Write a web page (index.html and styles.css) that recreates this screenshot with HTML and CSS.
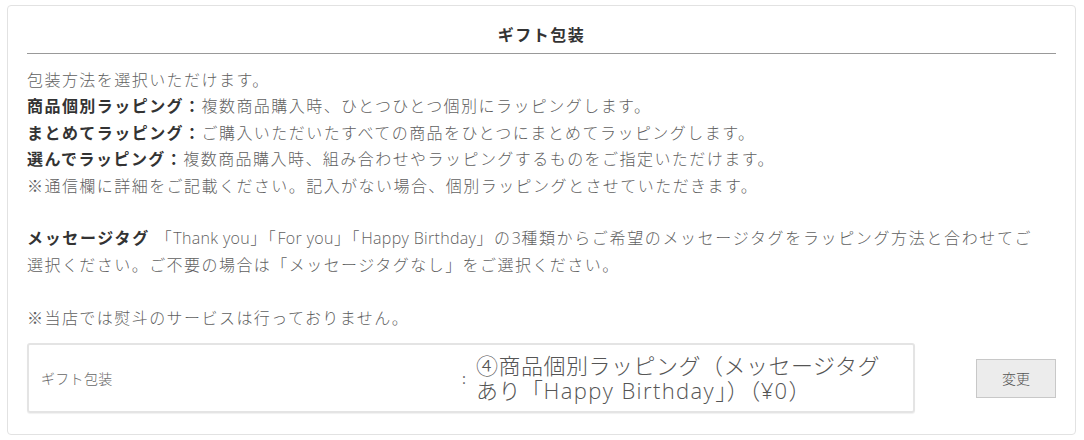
FILE: index.html
```html
<!DOCTYPE html>
<html lang="ja">
<head>
<meta charset="utf-8">
<title>ギフト包装</title>
<link rel="stylesheet" href="styles.css">
</head>
<body>
<div class="page">
  <section class="card">
    <h2 class="card-title">ギフト包装</h2>
    <div class="desc">
      <p>包装方法を選択いただけます。<br>
      <b>商品個別ラッピング：</b>複数商品購入時、ひとつひとつ個別にラッピングします。<br>
      <b>まとめてラッピング：</b>ご購入いただいたすべての商品をひとつにまとめてラッピングします。<br>
      <b>選んでラッピング：</b>複数商品購入時、組み合わせやラッピングするものをご指定いただけます。<br>
      ※通信欄に詳細をご記載ください。記入がない場合、個別ラッピングとさせていただきます。</p>
      <p class="msg"><b>メッセージタグ</b> 「<span class="en">Thank you</span>」「<span class="en">For you</span>」「<span class="en">Happy Birthday</span>」の<span class="en">3</span>種類からご希望のメッセージタグをラッピング方法と合わせてご選択ください。ご不要の場合は「メッセージタグなし」をご選択ください。</p>
      <p>※当店では熨斗のサービスは行っておりません。</p>
    </div>
    <div class="select-row">
      <div class="select-box">
        <span class="sel-label">ギフト包装</span>
        <span class="sel-colon">:</span>
        <span class="sel-value">④商品個別ラッピング（メッセージタグあり「<span class="en">Happy Birthday</span>」）（<span class="en">¥0</span>）</span>
      </div>
      <div class="btn-area">
        <button class="btn" type="button">変更</button>
      </div>
    </div>
  </section>
</div>
</body>
</html>
```
FILE: styles.css
```css
html, body {
  margin: 0;
  padding: 0;
  background: #ffffff;
}
body {
  font-family: "Open Sans", "Noto Sans CJK JP", sans-serif;
  color: #5f5f5f;
}
.page {
  padding: 5px 8px 0 7px;
}
.card {
  border: 1px solid #e2e2e2;
  border-radius: 4px;
  padding: 16px 19px 21px 19px;
  height: 430px;
  box-sizing: border-box;
}
.card-title {
  margin: 0;
  font-size: 16px;
  font-weight: 700;
  letter-spacing: 1.5px;
  line-height: 26px;
  text-align: center;
  color: #333333;
  padding-bottom: 5px;
  border-bottom: 1px solid #999999;
}
.desc {
  margin-top: 13px;
  padding-right: 24px;
  font-size: 16px;
  font-weight: 300;
  line-height: 26.4px;
  letter-spacing: 1.45px;
  text-align: justify;
}
.desc p {
  margin: 0 0 26.4px 0;
}
.desc p:last-child {
  margin-bottom: 0;
}
.desc b {
  color: #333333;
  font-weight: 700;
}
.en {
  letter-spacing: 0.3px;
}
.select-row {
  margin-top: 12px;
  display: flex;
  align-items: center;
}
.select-box {
  width: 888px;
  height: 70px;
  box-sizing: border-box;
  border: 2px solid #e4e4e4;
  border-radius: 3px;
  box-shadow: 0 1px 1px rgba(0,0,0,0.06);
  display: flex;
  align-items: center;
  padding-left: 12px;
}
.sel-label {
  width: 421px;
  font-size: 14px;
  font-weight: 300;
  letter-spacing: 0.3px;
  color: #666666;
}
.sel-colon {
  width: 14px;
  font-size: 15px;
  color: #666666;
}
.sel-value {
  width: 420px;
  font-size: 22px;
  font-weight: 300;
  line-height: 25px;
  letter-spacing: 0.5px;
  color: #555555;
  text-align: left;
}
.sel-value .en {
  letter-spacing: 1.4px;
}
.btn-area {
  flex: 1;
  display: flex;
  justify-content: flex-end;
}
.btn {
  width: 80px;
  height: 39px;
  background: #ececec;
  border: 1px solid #c8c8c8;
  border-radius: 0;
  font-family: "Open Sans", "Noto Sans CJK JP", sans-serif;
  font-size: 14px;
  font-weight: 300;
  color: #555555;
  padding: 0;
}
```
